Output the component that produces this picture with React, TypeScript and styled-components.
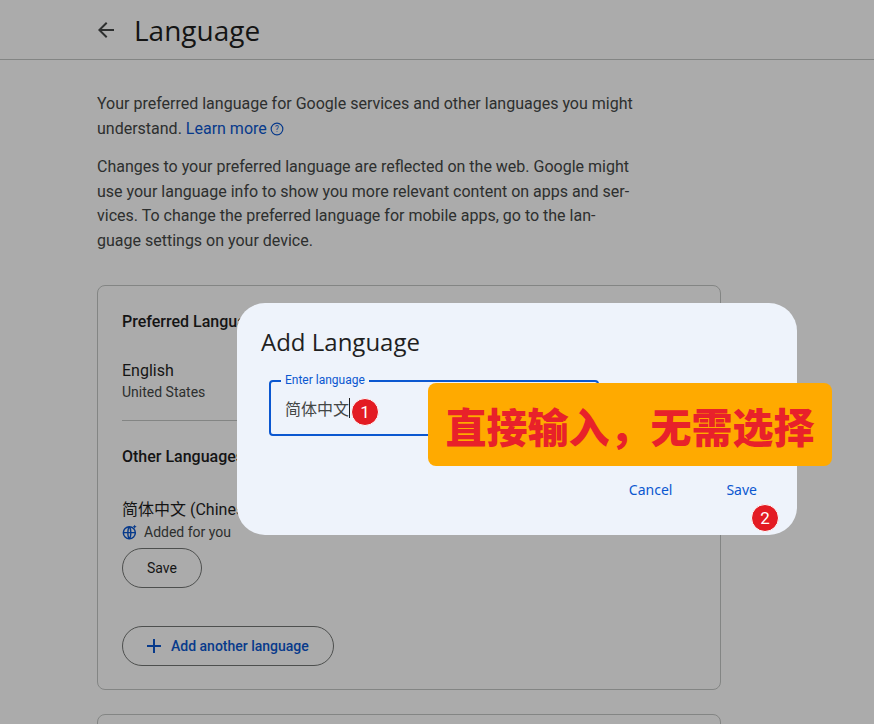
import React from "react";
import styled, { createGlobalStyle } from "styled-components";

const G = createGlobalStyle`
  html,body{margin:0;padding:0;background:#fff;overflow:hidden;}
  body{font-family:Roboto,"Noto Sans","Noto Sans CJK SC",sans-serif;color:#1f1f1f;}
`;
const Page = styled.div`position:relative;width:874px;height:724px;overflow:hidden;`;
const Header = styled.div`display:flex;align-items:center;gap:16px;height:60px;padding-left:94px;border-bottom:1px solid #c4c7c5;box-sizing:border-box;`;
const Title = styled.h1`margin:0;font-size:28px;font-weight:400;font-family:"Open Sans",Roboto,sans-serif;`;
const Content = styled.div`width:624px;margin-left:97px;padding-top:32px;`;
const P = styled.p`margin:0 0 14px;font-size:16px;line-height:24.5px;color:#444746;width:600px;`;
const Link = styled.span`color:#0b57d0;display:inline-flex;align-items:center;gap:3px;`;
const Card = styled.div`border:1px solid #c4c7c5;border-radius:8px;margin-top:32px;padding:26px 24px 28px;height:349px;`;
const Card2 = styled(Card)`margin-top:24px;`;
const H2 = styled.div`font-size:16px;font-weight:500;`;
const Lang = styled.div`font-size:16px;margin-top:30px;`;
const Sub = styled.div`font-size:14px;color:#444746;margin-top:4px;display:flex;align-items:center;gap:6px;`;
const Hr = styled.div`border-top:1px solid #c4c7c5;margin:20px 0 26px;`;
const Pill = styled.button<{mt:number}>`display:flex;align-items:center;gap:10px;border:1px solid #747775;border-radius:20px;background:none;height:40px;padding:0 24px;font:500 14px Roboto,sans-serif;color:#0b57d0;margin-top:${p=>p.mt}px;`;
const Dim = styled.div`position:absolute;inset:0;background:rgba(0,0,0,0.33);`;
const Dialog = styled.div`position:absolute;left:237px;top:303px;width:560px;height:232px;background:#eef3fb;border-radius:28px;padding:24px 24px 0;box-sizing:border-box;`;
const DTitle = styled.div`font-size:24px;font-family:"Open Sans",Roboto,sans-serif;margin-top:-2px;`;
const Field = styled.div`position:relative;margin:22px 0 0 8px;width:330px;height:56px;border:2px solid #0b57d0;border-radius:4px;box-sizing:border-box;display:flex;align-items:center;padding-left:14px;font-size:16px;color:#444746;`;
const Legend = styled.span`position:absolute;top:-9px;left:10px;background:#eef3fb;padding:0 4px;font-size:12px;color:#0b57d0;`;
const Caret = styled.span`display:inline-block;width:1px;height:20px;background:#1f1f1f;`;
const Actions = styled.div`display:flex;justify-content:flex-end;gap:54px;margin-top:44px;padding-right:16px;font-size:14px;font-weight:400;color:#0b57d0;font-family:"Noto Sans",sans-serif;`;
const Badge = styled.div<{x:number;y:number}>`position:absolute;left:${p=>p.x}px;top:${p=>p.y}px;width:28px;height:28px;border-radius:50%;background:#e31b23;color:#fff;border:1px solid #fff;box-sizing:border-box;display:flex;align-items:center;justify-content:center;font-size:17px;`;
const Callout = styled.div`position:absolute;left:428px;top:383px;width:404px;height:83px;border-radius:8px;background:#ffaa00;color:#e8212a;font:900 41px "Noto Sans CJK SC",sans-serif;display:flex;align-items:center;justify-content:center;`;

export default function App(){
  return <Page><G/>
    <Header>
      <svg width="24" height="24" viewBox="0 0 24 24"><path d="M20 11H7.83l5.59-5.59L12 4l-8 8 8 8 1.41-1.41L7.83 13H20z" fill="#444746"/></svg>
      <Title>Language</Title>
    </Header>
    <Content>
      <P>Your preferred language for Google services and other languages you might<br/>understand. <Link>Learn more<svg width="14" height="14" viewBox="0 0 24 24"><circle cx="12" cy="12" r="10" fill="none" stroke="#0b57d0" strokeWidth="2"/><text x="12" y="17" fontSize="14" textAnchor="middle" fill="#0b57d0">?</text></svg></Link></P>
      <P>Changes to your preferred language are reflected on the web. Google might<br/>use your language info to show you more relevant content on apps and ser-<br/>vices. To change the preferred language for mobile apps, go to the lan-<br/>guage settings on your device.</P>
      <Card>
        <H2>Preferred Language</H2>
        <Lang>English</Lang>
        <Sub>United States</Sub>
        <Hr/>
        <H2>Other Languages</H2>
        <Lang>简体中文 (Chinese)</Lang>
        <Sub><svg width="16" height="16" viewBox="0 0 24 24" fill="#0b57d0"><circle cx="11" cy="13" r="9" fill="none" stroke="#0b57d0" strokeWidth="2.2"/><path d="M2 13h18M11 4c3 3 3 15 0 18M11 4c-3 3-3 15 0 18" stroke="#0b57d0" strokeWidth="2" fill="none"/><path d="M19 1l1 2 2 1-2 1-1 2-1-2-2-1 2-1z"/></svg>Added for you</Sub>
        <Pill mt={8} style={{color:"#1f1f1f",fontWeight:400}}>Save</Pill>
        <Pill mt={38}><svg width="14" height="14" viewBox="0 0 14 14"><path d="M7 0v14M0 7h14" stroke="#0b57d0" strokeWidth="2"/></svg>Add another language</Pill>
      </Card>
      <Card2/>
    </Content>
    <Dim/>
    <Dialog>
      <DTitle>Add Language</DTitle>
      <Field><Legend>Enter language</Legend>简体中文<Caret/></Field>
      <Actions><span>Cancel</span><span>Save</span></Actions>
    </Dialog>
    <Badge x={351} y={398}>1</Badge>
    <Badge x={751} y={504}>2</Badge>
    <Callout>直接输入，无需选择</Callout>
  </Page>;
}
